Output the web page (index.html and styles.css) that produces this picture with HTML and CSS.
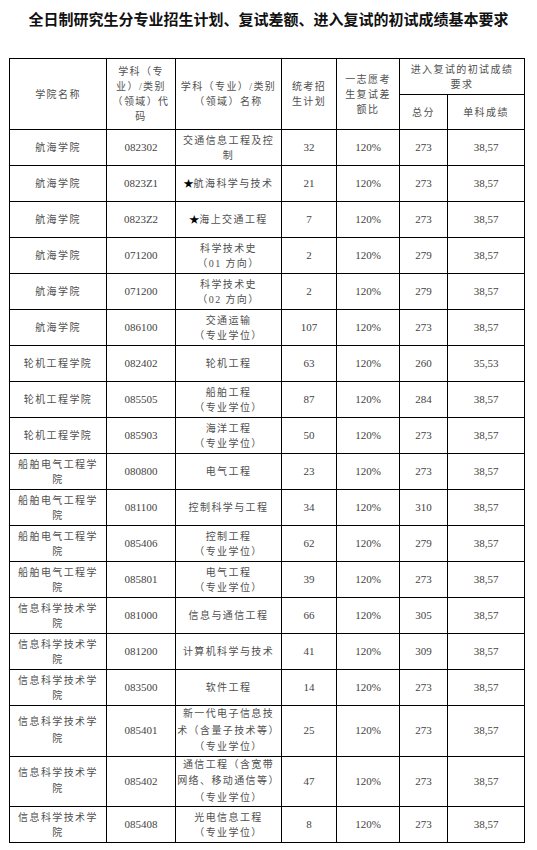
FILE: index.html
```html
<!DOCTYPE html>
<html lang="zh-CN">
<head>
<meta charset="utf-8">
<title>招生计划</title>
<link rel="stylesheet" href="styles.css">
</head>
<body>
<h1 class="title">全日制研究生分专业招生计划、复试差额、进入复试的初试成绩基本要求</h1>
<table class="plan">
  <colgroup>
    <col class="c1"><col class="c2"><col class="c3"><col class="c4"><col class="c5"><col class="c6"><col class="c7">
  </colgroup>
  <thead>
    <tr class="h1">
      <th rowspan="2" class="zh">学院名称</th>
      <th rowspan="2" class="zh">学科（专<br>业）/类别<br>（领域）代<br>码</th>
      <th rowspan="2" class="zh">学科（专业）/类别<br>（领域）名称</th>
      <th rowspan="2" class="zh">统考招<br>生计划</th>
      <th rowspan="2" class="zh">一志愿考<br>生复试差<br>额比</th>
      <th colspan="2" class="zh">进入复试的初试成绩<br>要求</th>
    </tr>
    <tr class="h2">
      <th class="zh">总分</th>
      <th class="zh">单科成绩</th>
    </tr>
  </thead>
  <tbody>
    <tr><td class="zh">航海学院</td><td>082302</td><td class="zh">交通信息工程及控<br>制</td><td>32</td><td>120%</td><td>273</td><td>38,57</td></tr>
    <tr><td class="zh">航海学院</td><td>0823Z1</td><td class="zh"><span class="star">★</span>航海科学与技术</td><td>21</td><td>120%</td><td>273</td><td>38,57</td></tr>
    <tr><td class="zh">航海学院</td><td>0823Z2</td><td class="zh"><span class="star">★</span>海上交通工程</td><td>7</td><td>120%</td><td>273</td><td>38,57</td></tr>
    <tr><td class="zh">航海学院</td><td>071200</td><td class="zh">科学技术史<br>（01 方向）</td><td>2</td><td>120%</td><td>279</td><td>38,57</td></tr>
    <tr><td class="zh">航海学院</td><td>071200</td><td class="zh">科学技术史<br>（02 方向）</td><td>2</td><td>120%</td><td>279</td><td>38,57</td></tr>
    <tr><td class="zh">航海学院</td><td>086100</td><td class="zh">交通运输<br>（专业学位）</td><td>107</td><td>120%</td><td>273</td><td>38,57</td></tr>
    <tr><td class="zh">轮机工程学院</td><td>082402</td><td class="zh">轮机工程</td><td>63</td><td>120%</td><td>260</td><td>35,53</td></tr>
    <tr><td class="zh">轮机工程学院</td><td>085505</td><td class="zh">船舶工程<br>（专业学位）</td><td>87</td><td>120%</td><td>284</td><td>38,57</td></tr>
    <tr><td class="zh">轮机工程学院</td><td>085903</td><td class="zh">海洋工程<br>（专业学位）</td><td>50</td><td>120%</td><td>273</td><td>38,57</td></tr>
    <tr><td class="zh">船舶电气工程学<br>院</td><td>080800</td><td class="zh">电气工程</td><td>23</td><td>120%</td><td>273</td><td>38,57</td></tr>
    <tr><td class="zh">船舶电气工程学<br>院</td><td>081100</td><td class="zh">控制科学与工程</td><td>34</td><td>120%</td><td>310</td><td>38,57</td></tr>
    <tr><td class="zh">船舶电气工程学<br>院</td><td>085406</td><td class="zh">控制工程<br>（专业学位）</td><td>62</td><td>120%</td><td>279</td><td>38,57</td></tr>
    <tr><td class="zh">船舶电气工程学<br>院</td><td>085801</td><td class="zh">电气工程<br>（专业学位）</td><td>39</td><td>120%</td><td>273</td><td>38,57</td></tr>
    <tr><td class="zh">信息科学技术学<br>院</td><td>081000</td><td class="zh">信息与通信工程</td><td>66</td><td>120%</td><td>305</td><td>38,57</td></tr>
    <tr><td class="zh">信息科学技术学<br>院</td><td>081200</td><td class="zh">计算机科学与技术</td><td>41</td><td>120%</td><td>309</td><td>38,57</td></tr>
    <tr><td class="zh">信息科学技术学<br>院</td><td>083500</td><td class="zh">软件工程</td><td>14</td><td>120%</td><td>273</td><td>38,57</td></tr>
    <tr class="tall"><td class="zh">信息科学技术学<br>院</td><td>085401</td><td class="zh">新一代电子信息技<br>术（含量子技术等）<br>（专业学位）</td><td>25</td><td>120%</td><td>273</td><td>38,57</td></tr>
    <tr class="tall2"><td class="zh">信息科学技术学<br>院</td><td>085402</td><td class="zh">通信工程（含宽带<br>网络、移动通信等）<br>（专业学位）</td><td>47</td><td>120%</td><td>273</td><td>38,57</td></tr>
    <tr><td class="zh">信息科学技术学<br>院</td><td>085408</td><td class="zh">光电信息工程<br>（专业学位）</td><td>8</td><td>120%</td><td>273</td><td>38,57</td></tr>
  </tbody>
</table>
</body>
</html>
```
FILE: styles.css
```css
html, body {
  margin: 0;
  padding: 0;
  background: #fff;
}

body {
  font-family: "Liberation Serif", "Noto Sans CJK SC", serif;
  color: #444;
}

.title {
  margin: 9px 0 0 0;
  height: 49px;
  font-family: "Noto Sans CJK SC", sans-serif;
  font-weight: 700;
  font-size: 15px;
  line-height: 20px;
  text-align: center;
  color: #111;
}

.plan {
  margin-left: 9px;
  width: 515px;
  table-layout: fixed;
  border-collapse: collapse;
}

.c1 { width: 97px; }
.c2 { width: 69px; }
.c3 { width: 106px; }
.c4 { width: 55px; }
.c5 { width: 63px; }
.c6 { width: 48px; }
.c7 { width: 77px; }

.plan th,
.plan td {
  border: 1px solid #000;
  padding: 0 1px;
  text-align: center;
  vertical-align: middle;
  font-size: 11px;
  font-weight: 400;
  line-height: 15px;
  white-space: nowrap;
  overflow: visible;
}

.plan .zh {
  font-size: 10px;
  letter-spacing: 1.4px;
  color: #505050;
}

.plan tr { height: 36px; }
.plan tr.h1 { height: 36px; }
.plan tr.h2 { height: 35px; }
.plan tr.tall { height: 50px; }
.plan tr.tall2 { height: 49px; }
.plan tr.tall .zh,
.plan tr.tall2 .zh { line-height: 16.5px; }

.star {
  color: #000;
  letter-spacing: 0;
  font-size: 10px;
}
```
